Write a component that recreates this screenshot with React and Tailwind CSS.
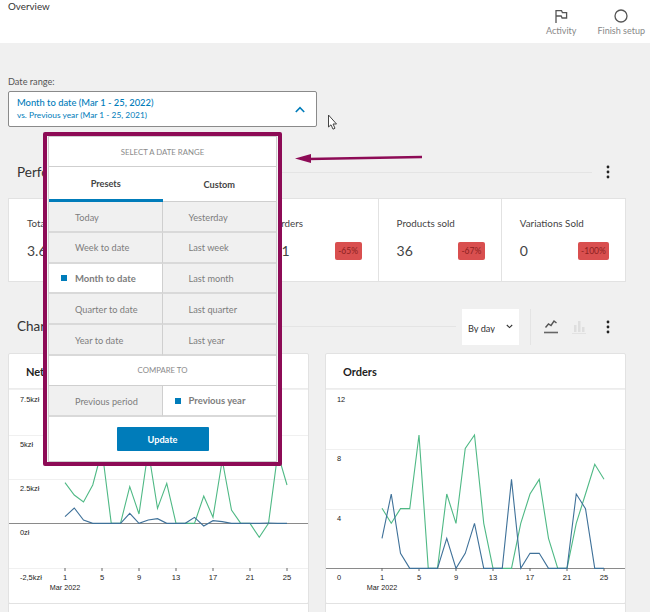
const greenL=[398,435,456,405,300,520,520,410,492,300,475,400,520,520,520,438,502,330,480,520,520,562,520,310,405];
const blueL=[500,474,510,520,520,520,520,490,520,510,506,520,520,520,502,528,512,515,520,520,520,520,519,520,520];
const greenR=[475,520,476,476,255,655,655,432,520,295,255,520,655,655,655,520,432,388,565,655,655,520,432,343,388];
const blueR=[565,432,610,655,655,655,655,565,655,610,520,655,655,655,388,655,610,610,655,655,655,432,476,655,655];

const pts=(arr,x0)=>arr.map((y,i)=>`${x0+i*9.25},${y/3+350-389}`).join(" ");
const ticks=[1,5,9,13,17,21,25];

function Chart({title,yLabels,grid,axis,x0,lx,green,blue}){
  return (
    <div className="bg-white border border-[#e2e2e2] rounded-[2px] h-[251px]">
      <div className="h-[35px] border-b border-[#ececec] pl-[17px] pt-[2px] flex items-center text-[11px] font-bold text-[#222]">{title}</div>
      <svg width="100%" height="214" className="block">
        {grid.map(y=><line key={y} x1="0" x2="300" y1={y} y2={y} stroke="#f0f0f0" strokeWidth="1"/>)}
        <line x1="0" x2="300" y1={axis} y2={axis} stroke="#8a8a8a" strokeWidth="1"/>
        {yLabels.map(([t,y])=><text key={t} x={lx} y={y} fontSize="7.4" fontFamily="Liberation Sans" fill="#222">{t}</text>)}
        {ticks.map((t,i)=><g key={t}>
          <line x1={x0+i*37} x2={x0+i*37} y1="179" y2="182" stroke="#666"/>
          <text x={x0+i*37} y="191" fontSize="7.6" fontFamily="Liberation Sans" fill="#222" textAnchor="middle">{t}</text>
        </g>)}
        <text x={x0} y="201" fontSize="7.2" fontFamily="Liberation Sans" fill="#222" textAnchor="middle">Mar 2022</text>
        <polyline points={pts(green,x0)} fill="none" stroke="#4fb985" strokeWidth="1.1"/>
        <polyline points={pts(blue,x0)} fill="none" stroke="#3f7199" strokeWidth="1.1"/>
      </svg>
    </div>
  );
}

function Stat({label,value,badge,badgeW}){
  return (
    <div className="border-r border-[#e2e2e2] last:border-r-0 pl-[18px] pr-[16px] pt-[17px]">
      <div className="text-[9.8px] leading-[15px] text-[#444]">{label}</div>
      <div className="flex justify-between items-center mt-[10px]">
        <span className="text-[14px] leading-[20px] text-[#444]">{value}</span>
        {badge && <span className={`h-[18px] ${badgeW} rounded-[2px] bg-[#d94f4f] text-[#8c1f1f] text-[8.5px] flex items-center justify-center`}>{badge}</span>}
      </div>
    </div>
  );
}

const Kebab=()=>(
  <svg width="4" height="14" viewBox="0 0 4 14" className="block"><circle cx="2" cy="2" r="1.4" fill="#222"/><circle cx="2" cy="7" r="1.4" fill="#222"/><circle cx="2" cy="12" r="1.4" fill="#222"/></svg>
);

function Cell({children,active,bold,right}){
  return (
    <div className={`relative flex items-center pt-[2px] text-[#7d7d7d] border-b-2 border-[#d9d9d9] ${right?"":"border-r border-r-[#cfcfcf]"} ${active?"bg-white":"bg-[#f0f0f0]"} ${bold?"font-bold text-[9.5px]":"text-[9.2px]"} pl-[26px]`}>
      {bold?<span className="absolute left-[12px] top-1/2 -mt-[3px] w-[6px] h-[6px] bg-[#007cba]"/>:null}
      {children}
    </div>
  );
}

export default function App(){
  return (
    <div className="relative w-[650px] h-[612px] overflow-hidden bg-[#f0f0f0] font-['Lato','Open_Sans',sans-serif]">
      <header className="h-[43px] bg-white flex justify-between pl-[8px] pr-[5px]">
        <div className="text-[9.8px] leading-[13px] text-[#333]">Overview</div>
        <div className="flex gap-[21px] pt-[9px] text-[9px] leading-[12px] text-[#888]">
          <div className="flex flex-col items-center gap-[2px]">
            <svg width="14" height="14" viewBox="0 0 14 14" fill="none" stroke="#555" strokeWidth="1.3"><path d="M2 14V1.6H7.5L8.4 3.6H12.6V9H8.1L7.2 7H2"/></svg>
            <span>Activity</span>
          </div>
          <div className="flex flex-col items-center gap-[2px]">
            <svg width="14" height="14" viewBox="0 0 14 14" fill="none" stroke="#555" strokeWidth="1.3"><circle cx="7" cy="7" r="6"/></svg>
            <span>Finish setup</span>
          </div>
        </div>
      </header>

      <main className="pl-[8px] pr-[24px]">
        <div className="pt-[32px] text-[9.2px] leading-[13px] text-[#555]">Date range:</div>
        <div className="mt-[3px] w-[309px] h-[36px] bg-white border border-[#8a8a8a] rounded-[2px] pl-[8px] pr-[11px] flex items-center justify-between">
          <div>
            <div className="text-[9.4px] leading-[12px] text-[#007cba] font-medium">Month to date (Mar 1 - 25, 2022)</div>
            <div className="text-[8.4px] leading-[12px] text-[#007cba]">vs. Previous year (Mar 1 - 25, 2021)</div>
          </div>
          <svg width="10" height="7" viewBox="0 0 10 7" fill="none" stroke="#007cba" strokeWidth="1.6"><path d="M.8 6 5 1.6 9.2 6"/></svg>
        </div>

        <section className="mt-[33px] flex items-center h-[24px]">
          <h2 className="pl-[9px] text-[13.5px] font-normal text-[#333] pr-[10px]">Performance</h2>
          <div className="flex-1 border-t border-[#e4e4e4] mr-[14px]"/>
          <div className="mr-[16px]"><Kebab/></div>
        </section>

        <div className="mt-[14px] h-[84px] grid grid-cols-5 bg-white border border-[#e2e2e2]">
          <Stat label="Total sales" value="3.664"/>
          <Stat label="Net sales" value="3.664"/>
          <Stat label="Orders" value="31" badge="-65%" badgeW="w-[27px]"/>
          <Stat label="Products sold" value="36" badge="-67%" badgeW="w-[27px]"/>
          <Stat label="Variations Sold" value="0" badge="-100%" badgeW="w-[31px]"/>
        </div>

        <section className="mt-[26px] h-[37px] flex items-center">
          <h2 className="pl-[9px] text-[13.5px] font-normal text-[#333] pr-[10px]">Charts</h2>
          <div className="flex-1 border-t border-[#e4e4e4] mr-[6px]"/>
          <div className="h-[36px] w-[57px] bg-white flex items-center justify-between pl-[6px] pr-[6px] text-[9.2px] text-[#333]">
            <span className="block h-[10px] leading-[11px] overflow-hidden mt-[2px]">By day</span>
            <svg width="7" height="5" viewBox="0 0 7 5" fill="none" stroke="#333" strokeWidth="1.1"><path d="M.8 1 3.5 3.6 6.2 1"/></svg>
          </div>
          <div className="ml-[11px] h-[36px] border-l border-[#e4e4e4]"/>
          <svg className="ml-[13px]" width="14" height="15" viewBox="0 0 14 15" fill="none"><path d="M1.5 8.5 4.5 5 7 6.5 10 2 12.5 4" stroke="#555" strokeWidth="1.4"/><path d="M0 13.5H14" stroke="#666" strokeWidth="1.6"/></svg>
          <svg className="ml-[14px]" width="14" height="14" viewBox="0 0 14 14"><path d="M2 5h2.5v7H2zM6 1h2.5v11H6zM10 7h2.5v5H10z" fill="#dedede"/><path d="M0 13.5H14" stroke="#e2e2e2"/></svg>
          <div className="ml-[20px] mr-[16px]"><Kebab/></div>
        </section>

        <div className="mt-[8px] grid grid-cols-[301px_301px] gap-x-[16px]">
          <Chart title="Net sales" x0={56} lx={11}
            yLabels={[["7.5kzł",13],["5kzł",58],["2.5kzł",102],["0zł",146],["-2,5kzł",191]]}
            grid={[.5,46.5,90.5,179.5]} axis={134.5} green={greenL} blue={blueL}/>
          <Chart title="Orders" x0={56} lx={11}
            yLabels={[["12",13],["8",72],["4",132],["0",191]]}
            grid={[.5,60.5,120.5]} axis={179.5} green={greenR} blue={blueR}/>
          <div className="mt-[-1px] h-[20px] bg-white border border-[#e2e2e2]"/>
          <div className="mt-[-1px] h-[20px] bg-white border border-[#e2e2e2]"/>
        </div>
      </main>

      {/* date range dropdown */}
      <div className="absolute left-[43px] top-[132px] w-[239px] h-[334px] border-[4px] border-[#8d0b56] rounded-[2px] bg-[#f7f7f7] pl-[1px] pr-[1px]">
        <div className="h-full bg-white border border-[#d0d0d0] flex flex-col">
          <div className="h-[30px] shrink-0 pt-[2px] border-b border-[#cfcfcf] flex items-center justify-center text-[7.8px] text-[#8a8a8a]">SELECT A DATE RANGE</div>
          <div className="h-[35px] shrink-0 grid grid-cols-2 text-[9.2px] font-bold text-[#444]">
            <div className="border-b-[3px] pt-[2px] border-[#007cba] flex items-center justify-center">Presets</div>
            <div className="border-b pt-[1px] border-[#cfcfcf] flex items-center justify-center">Custom</div>
          </div>
          <div className="grid grid-cols-2 h-[154px] shrink-0 grid-rows-5">
            <Cell>Today</Cell><Cell right>Yesterday</Cell>
            <Cell>Week to date</Cell><Cell right>Last week</Cell>
            <Cell active bold>Month to date</Cell><Cell right>Last month</Cell>
            <Cell>Quarter to date</Cell><Cell right>Last quarter</Cell>
            <Cell>Year to date</Cell><Cell right>Last year</Cell>
          </div>
          <div className="h-[30px] shrink-0 border-b border-[#cfcfcf] flex items-center justify-center text-[7.8px] text-[#8a8a8a]">COMPARE TO</div>
          <div className="h-[31px] shrink-0 grid grid-cols-2">
            <Cell>Previous period</Cell>
            <Cell active bold right>Previous year</Cell>
          </div>
          <div className="flex-1 flex items-center justify-center">
            <div className="w-[92px] h-[24px] pt-[1px] bg-[#007cba] rounded-[1px] text-white text-[9.2px] font-bold flex items-center justify-center">Update</div>
          </div>
        </div>
      </div>

      {/* annotation arrow */}
      <svg className="absolute left-[290px] top-[148px]" width="136" height="20" viewBox="0 0 136 20">
        <path d="M132 9 L18 11" stroke="#8d0b56" strokeWidth="2.5"/>
        <path d="M5 10.5 L21 6 L21 15 Z" fill="#8d0b56"/>
      </svg>

      {/* mouse pointer */}
      <svg className="absolute left-[327px] top-[114px]" width="11" height="17" viewBox="0 0 11 17">
        <path d="M1.5 1V13L4 10.8 6 15.2 8 14.2 6 10H9.5Z" fill="#fff" stroke="#444" strokeWidth="1"/>
      </svg>
    </div>
  );
}
